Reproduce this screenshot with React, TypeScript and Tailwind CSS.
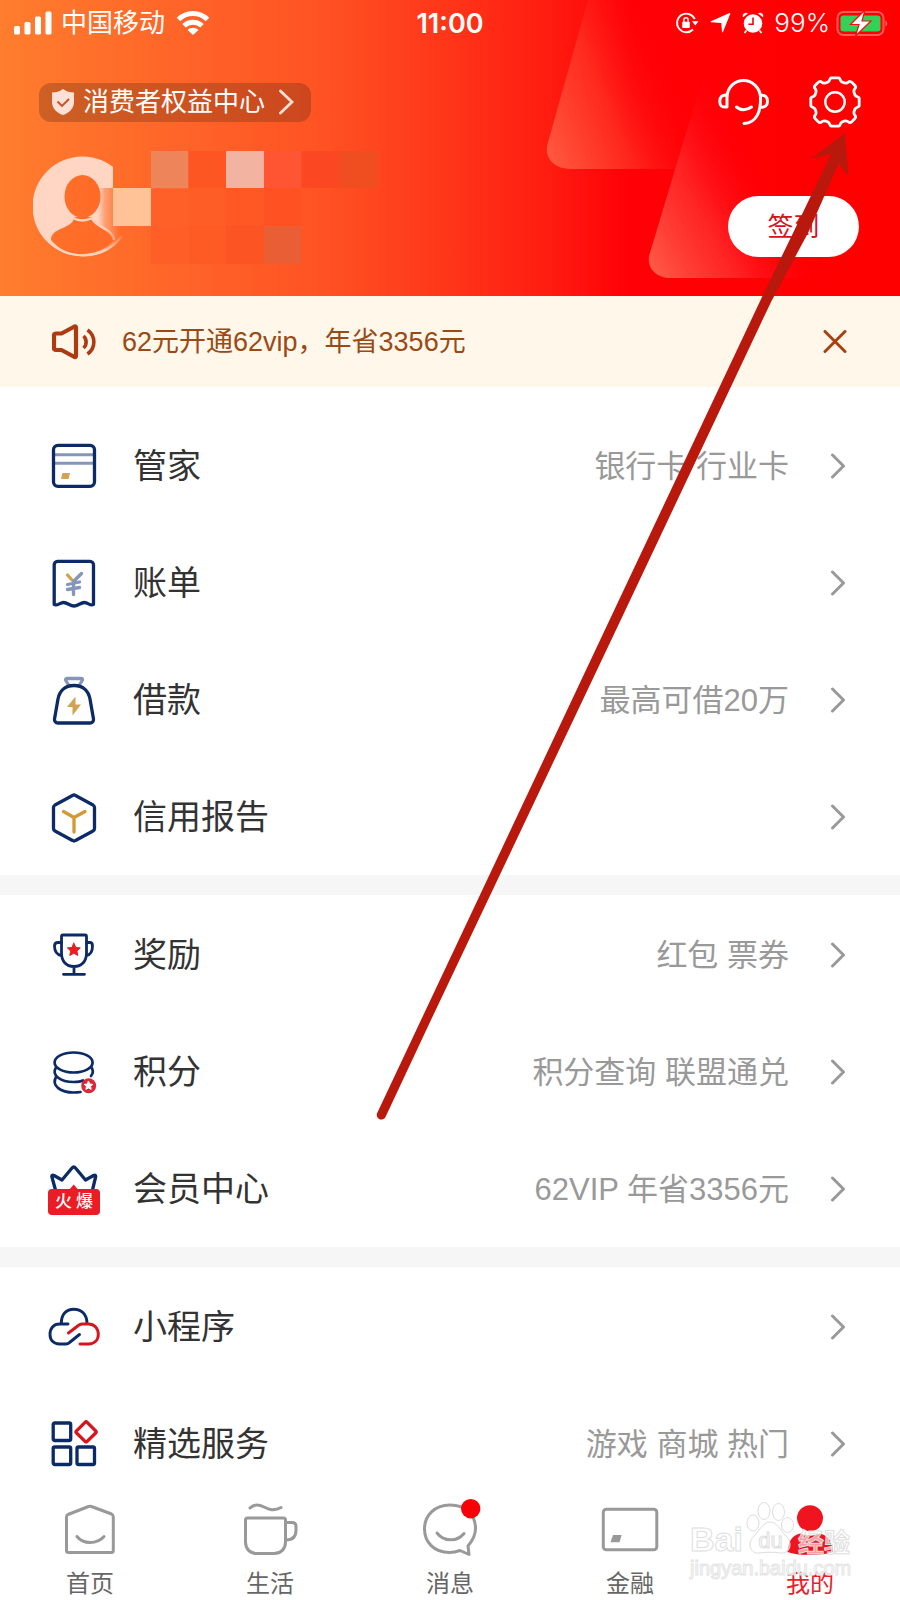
import type { ReactNode } from 'react';

const NAVY = '#0c2a66';
const STEEL = '#8496bb';
const GOLD = '#d0a352';
const RED = '#ea1c25';

const Star = ({ x, y, r, fill }: { x: number; y: number; r: number; fill: string }) => {
  const points = Array.from({ length: 10 }, (_, i) => {
    const radius = i % 2 === 0 ? r : r * 0.48;
    const angle = (Math.PI / 5) * i - Math.PI / 2;
    return `${x + radius * Math.cos(angle)},${y + radius * Math.sin(angle)}`;
  }).join(' ');
  return <polygon points={points} fill={fill} stroke={fill} strokeWidth="1" strokeLinejoin="round" />;
};

const RowIcon = ({ children }: { children: ReactNode }) => (
  <svg
    viewBox="0 0 52 52"
    className="size-[52px] overflow-visible"
    fill="none"
    stroke={NAVY}
    strokeWidth="3.3"
    strokeLinecap="round"
    strokeLinejoin="round"
    aria-hidden="true"
  >
    {children}
  </svg>
);

const CardIcon = () => (
  <RowIcon>
    <path d="M6 14.8H46M6 23.3H46" stroke={STEEL} strokeLinecap="butt" strokeWidth="3" />
    <rect x="5.5" y="5.3" width="41" height="41" rx="4.5" />
    <path d="M14.5 33H22L20.5 39H13Z" fill={GOLD} stroke="none" />
  </RowIcon>
);

const BillIcon = () => (
  <RowIcon>
    <path d="M9.5 4.3H42a3.5 3.5 0 0 1 3.5 3.5V47.5C42.5 49.5 40 45.5 36.5 45.5C32.5 45.5 30 49 26 49C22 49 19.5 45.5 15.5 45.5C12 45.5 9 49.5 6.2 47.5V7.8A3.5 3.5 0 0 1 9.5 4.3Z" />
    <path d="M19.5 18L24 23" stroke={GOLD} />
    <path d="M33.5 16.5L25.5 24.5V37.5M19.5 27.5L31.5 25M19.5 32.5L31.5 30.5" stroke={STEEL} />
  </RowIcon>
);

const BagIcon = () => (
  <RowIcon>
    <path d="M20.5 11L17.5 6A1.5 1.5 0 0 1 19 4.5H33A1.5 1.5 0 0 1 34.5 6L31.5 11" stroke={STEEL} />
    <path d="M26 11.5C35 11.5 40.5 17 42 25L45.5 45A3.5 3.5 0 0 1 42 49H10A3.5 3.5 0 0 1 6.5 45L10 25C11.5 17 17 11.5 26 11.5Z" />
    <path d="M27.5 22.5L19 33H24.5V41.5L33 30.5H27.5Z" fill={GOLD} stroke="none" />
  </RowIcon>
);

const ReportIcon = () => (
  <RowIcon>
    <path d="M24.5 4.5Q26 3.5 27.5 4.5L45 14Q46.5 15 46.5 16.5V37.5Q46.5 39 45 40L27.5 49.5Q26 50.5 24.5 49.5L7 40Q5.5 39 5.5 37.5V16.5Q5.5 15 7 14Z" />
    <path d="M15.5 20.5L26 26.5L37 20.5M26 26.5V41" stroke="#d29a34" />
  </RowIcon>
);

const TrophyIcon = () => (
  <RowIcon>
    <g strokeWidth="2.8">
      <path d="M15 6H37Q38.5 6 38.5 7.5V24C38.5 32 34 37.5 26 37.5S13.5 32 13.5 24V7.5Q13.5 6 15 6ZM26 37.5V45.3M15.5 45.3H36.5" />
      <path d="M13.5 13.5H10Q6.5 13.5 6.5 17C6.5 21.5 8 25.5 13.5 26.5M38.5 13.5H42Q44.5 13.5 44.5 17C44.5 21.5 43.5 25.5 38.5 26.5" />
    </g>
    <Star x={25.8} y={21} r={6.8} fill={RED} />
  </RowIcon>
);

const CoinsIcon = () => (
  <RowIcon>
    <g strokeWidth="2.7">
      <ellipse cx="25.6" cy="16.5" rx="19" ry="10" />
      <path d="M8 21.5C3 29.5 13 36 25.6 36C30 36 33 35.5 35 34.5M43.5 21.5C45.5 24.5 45 27.5 43 30" />
      <path d="M8 31C3 40 13 46.5 25.6 46.5C28.5 46.5 30.5 46.3 32.5 46" />
    </g>
    <circle cx="40.7" cy="39.8" r="7.5" fill="#dc2836" stroke="none" />
    <Star x={40.5} y={39.8} r={4.5} fill="#fff" />
  </RowIcon>
);

const CrownIcon = () => (
  <div className="relative">
    <RowIcon>
      <path d="M7.5 27L3.8 13.5Q3.8 11.5 6 12.5L14 17L24 5Q25.7 3 27.5 5L37.5 17L45.5 12.5Q47.7 11.5 47.7 13.5L44.5 27" />
      <path d="M21 27L25.7 21.5L30.5 27Z" fill={RED} stroke="none" />
    </RowIcon>
    <span className="absolute inset-x-0 bottom-0 flex h-[26px] items-center justify-center gap-1 rounded bg-[#ea1c25] text-[17px] leading-none font-medium text-white">
      <span>火</span>
      <span>爆</span>
    </span>
  </div>
);

const CloudIcon = () => (
  <RowIcon>
    <g strokeWidth="2.9">
      <path d="M13.3 22.5C13.3 13 18.5 8.2 25.8 8.2S39 13 39 22.5" />
      <path d="M20 23H11.5C5.5 23 2 27.5 2 33.3S5.5 43 11.5 43H18Q20 43 21.5 41.5L31.5 33.5" />
      <path d="M20.5 32L31 24Q32.5 23 34.5 23H40.5C46.5 23 50.3 27.5 50.3 33.3S46.5 43 40.5 43H32" stroke="#d8141c" />
    </g>
  </RowIcon>
);

const ServicesIcon = () => (
  <RowIcon>
    <rect x="5.2" y="5" width="17.5" height="17.5" rx="1.5" />
    <rect x="5.2" y="29" width="17.5" height="17.5" rx="1.5" />
    <rect x="29" y="29" width="17.5" height="17.5" rx="1.5" />
    <rect x="30.6" y="6.4" width="15" height="15" rx="1.5" transform="rotate(45 38.1 13.9)" stroke="#d8141c" />
  </RowIcon>
);

const Chevron = () => (
  <svg viewBox="0 0 16 26" className="h-[26px] w-4" fill="none" stroke="#999" strokeWidth="3" strokeLinecap="round" strokeLinejoin="round" aria-hidden="true">
    <path d="M2.5 2L13.5 13L2.5 24" />
  </svg>
);

type Item = { label: string; hint?: string; icon: ReactNode };

const groups: Item[][] = [
  [
    { label: '管家', hint: '银行卡 行业卡', icon: <CardIcon /> },
    { label: '账单', icon: <BillIcon /> },
    { label: '借款', hint: '最高可借20万', icon: <BagIcon /> },
    { label: '信用报告', icon: <ReportIcon /> },
  ],
  [
    { label: '奖励', hint: '红包 票券', icon: <TrophyIcon /> },
    { label: '积分', hint: '积分查询 联盟通兑', icon: <CoinsIcon /> },
    { label: '会员中心', hint: '62VIP 年省3356元', icon: <CrownIcon /> },
  ],
  [
    { label: '小程序', icon: <CloudIcon /> },
    { label: '精选服务', hint: '游戏 商城 热门', icon: <ServicesIcon /> },
  ],
];

const MenuRow = ({ label, hint, icon }: Item) => (
  <li>
    <a href="#" className="flex h-[117px] items-center pr-[54px] pl-12">
      {icon}
      <span className="ml-[33px] text-[34px] leading-10 text-[#333]">{label}</span>
      <span className="mr-[41px] ml-auto pt-0.5 text-[31px] leading-10 text-[#999]">{hint}</span>
      <Chevron />
    </a>
  </li>
);

const StatusBar = () => (
  <div className="grid h-[46px] grid-cols-[1fr_auto_1fr] items-center px-2.5 text-[26px] leading-none">
    <div className="flex items-center pl-1">
      <svg viewBox="0 0 38 24" className="h-6 w-[38px]" fill="currentColor" aria-hidden="true">
        <rect x="0" y="15" width="6" height="8.5" rx="1.5" />
        <rect x="10.5" y="11" width="6" height="12.5" rx="1.5" />
        <rect x="21" y="5.5" width="6" height="18" rx="1.5" />
        <rect x="31.5" y="0.5" width="6" height="23" rx="1.5" />
      </svg>
      <span className="ml-[9px]">中国移动</span>
      <svg viewBox="0 0 34 26" className="ml-[11px] h-[26px] w-[34px]" fill="none" stroke="currentColor" strokeWidth="5" aria-hidden="true">
        <path d="M2.5 9.5C10.5 1.5 23.5 1.5 31.5 9.5" />
        <path d="M8 15.8C13 11 21 11 26 15.8" />
        <path d="M17 25L11.5 20C14.7 17 19.3 17 22.5 20Z" fill="currentColor" stroke="none" />
      </svg>
    </div>
    <time className="font-['Inter',sans-serif] text-[27px] font-semibold">11:00</time>
    <div className="flex items-center justify-end">
      <svg viewBox="0 0 24 24" className="size-6" fill="none" stroke="currentColor" strokeWidth="1.8" aria-hidden="true">
        <path d="M19.8 8A9.3 9.3 0 1 0 18 18.5" />
        <path d="M17 10.2H23.5L20.3 14.5Z" fill="currentColor" stroke="none" />
        <rect x="7.2" y="10.8" width="7.6" height="6.2" rx="1" fill="currentColor" stroke="none" />
        <path d="M8.9 11V8.8a2.1 2.1 0 0 1 4.2 0V11" strokeWidth="1.4" />
      </svg>
      <svg viewBox="0 0 21 20" className="ml-[11px] h-5 w-[21px]" fill="currentColor" aria-hidden="true">
        <path d="M20.3 0.7L13 19Q12.4 20 12 18.8L11.3 9.9L1.2 9.3Q0 8.8 1 8.2L19 0.3Q20.5-0.2 20.3 0.7Z" />
      </svg>
      <svg viewBox="0 0 22 22" className="ml-[11px] size-[22px]" fill="currentColor" aria-hidden="true">
        <path d="M1 5.2A3.2 3.2 0 0 1 6 1.5ZM21 5.2A3.2 3.2 0 0 0 16 1.5Z" />
        <circle cx="11" cy="11.5" r="9.3" />
        <path d="M4.5 18.5L2.5 21M17.5 18.5L19.5 21" stroke="currentColor" strokeWidth="1.8" />
        <path d="M11 5.5V12.2H6.5" fill="none" stroke="#f00" strokeWidth="1.6" />
      </svg>
      <span className="ml-2.5 font-['Inter',sans-serif] font-light">99%</span>
      <svg viewBox="0 0 54 28" className="ml-1.5 h-7 w-[54px]" aria-hidden="true">
        <rect x="1.5" y="3" width="46" height="23" rx="6" fill="none" stroke="#fff" strokeOpacity="0.35" strokeWidth="2" />
        <path d="M49.5 11Q53 14.5 49.5 18Z" fill="#fff" fillOpacity="0.4" />
        <rect x="4.5" y="6.5" width="40" height="16" rx="3" fill="#32d158" />
        <path d="M29 1L14.5 15.5H23L19.5 27L35 12H26Z" fill="#fff" stroke="#f01010" strokeWidth="1.2" />
      </svg>
    </div>
  </div>
);

// profile photo followed by the pixelated nickname block
const Profile = () => (
  <svg viewBox="33 150 345 115" className="h-[115px] w-[345px]" role="img" aria-label="头像">
    <defs>
      <linearGradient id="photo" gradientUnits="userSpaceOnUse" x1="98" x2="120" y1="0" y2="0">
        <stop offset="0" stopColor="#ffd5c3" />
        <stop offset="0.3" stopColor="#ffd5c3" stopOpacity="0.5" />
        <stop offset="1" stopColor="#ffd5c3" stopOpacity="0" />
      </linearGradient>
      <linearGradient id="ring" gradientUnits="userSpaceOnUse" x1="104" x2="126" y1="0" y2="0">
        <stop offset="0" stopColor="#ffcfb8" />
        <stop offset="1" stopColor="#ffcfb8" stopOpacity="0" />
      </linearGradient>
      <linearGradient id="person" gradientUnits="userSpaceOnUse" x1="50" x2="115" y1="0" y2="0">
        <stop offset="0" stopColor="#ff7029" />
        <stop offset="1" stopColor="#ff6927" />
      </linearGradient>
      <clipPath id="photoTop">
        <path d="M30 150H113V188H30Z" />
      </clipPath>
      <clipPath id="photoBottom">
        <path d="M30 188H135V260H30Z" />
      </clipPath>
    </defs>
    <circle cx="82.5" cy="206.5" r="50" fill="#ffd5c3" clipPath="url(#photoTop)" />
    <circle cx="82.5" cy="206.5" r="50" fill="url(#photo)" clipPath="url(#photoBottom)" />
    <path d="M74 217C74 229 51 227 51 240C66 259 98 259 114 240C114 227 92 229 92 217Z" fill="url(#person)" />
    <ellipse cx="82.5" cy="196.5" rx="18" ry="21.5" fill="url(#person)" />
    <path d="M73 218Q82.5 223 92 218" fill="none" stroke="#ffd0bc" strokeWidth="2.5" />
    <path d="M92 218C95 227 113 229 114 240" fill="none" stroke="url(#ring)" strokeWidth="2.5" />
    <path d="M82.5 255.3C99 255.3 113 248 122 236" fill="none" stroke="url(#ring)" strokeWidth="2.5" />
    <rect x="113" y="188" width="38" height="38" fill="#ffc397" />
    <rect x="151" y="151" width="37.5" height="37.5" fill="#ee8459" />
    <rect x="188.5" y="151" width="37.5" height="37.5" fill="#fd5622" />
    <rect x="226" y="151" width="38" height="37" fill="#f2b4a1" />
    <rect x="264" y="151" width="37.5" height="37" fill="#ff5532" />
    <rect x="301.5" y="151" width="37.5" height="37" fill="#fb4722" />
    <rect x="339" y="151" width="38" height="37" fill="#f04e20" />
    <rect x="151" y="188.5" width="37.5" height="37.5" fill="#ff6028" />
    <rect x="188.5" y="188.5" width="37.5" height="37.5" fill="#ff5d26" />
    <rect x="226" y="188" width="38" height="38" fill="#ff5825" />
    <rect x="264" y="188" width="37" height="38" fill="#ff5122" />
    <rect x="151" y="226" width="37.5" height="38" fill="#ff5e26" />
    <rect x="188.5" y="226" width="37.5" height="38" fill="#fe5a24" />
    <rect x="226" y="226" width="38" height="38" fill="#fc5523" />
    <rect x="264" y="226" width="37" height="38" fill="#e95e34" />
  </svg>
);

const HeaderShapes = () => (
  <svg viewBox="500 0 400 296" className="absolute top-0 right-0 h-[296px] w-[400px]" aria-hidden="true">
    <defs>
      <linearGradient id="glowA" gradientUnits="userSpaceOnUse" x1="550" y1="165" x2="688" y2="105">
        <stop offset="0" stopColor="#ff5a40" />
        <stop offset="0.5" stopColor="#ff3a28" stopOpacity="0.65" />
        <stop offset="1" stopColor="#ff0008" stopOpacity="0" />
      </linearGradient>
      <linearGradient id="glowB" gradientUnits="userSpaceOnUse" x1="652" y1="272" x2="778" y2="205">
        <stop offset="0" stopColor="#ff5a46" />
        <stop offset="0.5" stopColor="#ff3432" stopOpacity="0.7" />
        <stop offset="1" stopColor="#ff0018" stopOpacity="0" />
      </linearGradient>
    </defs>
    <path d="M588 0L547 146C545 160 556 169 571 169H740V0Z" fill="url(#glowA)" />
    <path d="M702 80L649 256C647 270 658 278 670 278H860V80Z" fill="url(#glowB)" />
  </svg>
);

const Header = () => (
  <header className="relative bg-[linear-gradient(90deg,#ff7d2e_0%,#ff6428_20%,#ff5223_36%,#ff3519_50%,#ff1c10_61%,#ff0006_70%,#ff0000_100%)] pb-[31px] text-white">
    <HeaderShapes />
    <div className="relative">
      <StatusBar />
      <div className="mt-[30px] flex h-[52px] items-center justify-between px-[39px]">
        <button type="button" className="flex h-[39px] items-center rounded-xl bg-[#5a2a10]/30 pr-[17px] pl-[13px] text-[26px] leading-none">
          <svg viewBox="0 0 22 26" className="h-[26px] w-[22px]" aria-hidden="true">
            <path d="M11 0C14 2.5 18 3.5 22 3.5V13C22 19.5 17 24 11 26C5 24 0 19.5 0 13V3.5C4 3.5 8 2.5 11 0Z" fill="#ffe0d6" />
            <path d="M5.5 12.5L10 17L17 10" fill="none" stroke="#c8501f" strokeWidth="1.8" />
          </svg>
          <span className="ml-[9px]">消费者权益中心</span>
          <svg viewBox="0 0 16 26" className="ml-[13px] h-[26px] w-4" fill="none" stroke="#ffe0d6" strokeWidth="2.8" strokeLinecap="round" aria-hidden="true">
            <path d="M2.5 2L14 13L2.5 24" />
          </svg>
        </button>
        <div className="flex gap-[39px]">
          <button type="button" aria-label="客服">
            <svg viewBox="0 0 52 52" className="size-[52px]" fill="none" stroke="currentColor" strokeWidth="3" strokeLinecap="round" strokeLinejoin="round" aria-hidden="true">
              <path d="M9 20C10 11 16.5 4.5 25.5 4.5S42 12 42.5 21C43 34 39.5 47 26 47.5" />
              <path d="M9 31V19C4 18.5 1.8 21 1.8 25.5C1.8 30 4 31.5 9 31Z" />
              <path d="M42.5 19.5C47 18.5 49.5 21 49.5 25.5C49.5 29.5 46.5 32 42.5 31" />
              <path d="M18.5 31C22.5 34.5 28.5 34.5 33.5 31" />
            </svg>
          </button>
          <button type="button" aria-label="设置">
            <svg viewBox="0 0 52 52" className="size-[52px]" fill="none" stroke="currentColor" strokeWidth="2.8" strokeLinejoin="round" aria-hidden="true">
              <path
                d="M22 1.8H30C31 1.8 31 5 33 6S38 7.5 39.5 6C40.5 5 42 5.5 43 6.5L45.5 9C46.5 10 47 11.5 46 12.5C44.5 14 45 17 46 19S50.2 21 50.2 22V30C50.2 31 47 31 46 33S44.5 38 46 39.5C47 40.5 46.5 42 45.5 43L43 45.5C42 46.5 40.5 47 39.5 46C38 44.5 35 45 33 46S31 50.2 30 50.2H22C21 50.2 21 47 19 46S14 44.5 12.5 46C11.5 47 10 46.5 9 45.5L6.5 43C5.5 42 5 40.5 6 39.5C7.5 38 7 35 6 33S1.8 31 1.8 30V22C1.8 21 5 21 6 19S7.5 14 6 12.5C5 11.5 5.5 10 6.5 9L9 6.5C10 5.5 11.5 5 12.5 6C14 7.5 17 7 19 6S21 1.8 22 1.8Z"
              />
              <circle cx="26" cy="26" r="9.7" strokeWidth="2.4" />
            </svg>
          </button>
        </div>
      </div>
      <div className="mt-[22px] flex items-end justify-between pr-[41px] pl-[33px]">
        <Profile />
        <button type="button" className="mb-2 h-[61px] w-[131px] rounded-full bg-white text-[26px] leading-none text-[#d8101c]">
          签到
        </button>
      </div>
    </div>
  </header>
);

const Notice = () => (
  <div className="flex h-[91px] items-center bg-[#fef7ea] pr-[53px] pl-[52px] text-[#9a4a14]">
    <svg viewBox="0 0 44 36" className="h-9 w-11" fill="none" stroke="#ad3a10" strokeWidth="4.2" strokeLinecap="round" strokeLinejoin="round" aria-hidden="true">
      <path d="M4 9.5H9.5L22.5 2.5Q24 2 24 3.5V32Q24 33.5 22.5 33L9.5 26H4Q2 26 2 24V11.5Q2 9.5 4 9.5Z" />
      <path d="M31.5 12C35 15 35 21 31.5 24M35.5 6C44 12 44 24 35.5 30" strokeWidth="3.6" strokeLinecap="butt" />
    </svg>
    <p className="ml-[26px] text-[27px] leading-10">62元开通62vip，年省3356元</p>
    <button type="button" aria-label="关闭" className="ml-auto">
      <svg viewBox="0 0 24 24" className="size-6" fill="none" stroke="#a8400f" strokeWidth="3" strokeLinecap="round" aria-hidden="true">
        <path d="M2 1.5L22 21.5M22 1.5L2 21.5" />
      </svg>
    </button>
  </div>
);

const TabIcon = ({ children }: { children: ReactNode }) => (
  <svg viewBox="0 2 60 56" className="h-14 w-[60px] overflow-visible" fill="none" stroke="#999" strokeWidth="3" strokeLinecap="round" strokeLinejoin="round" aria-hidden="true">
    {children}
  </svg>
);

const tabs: { label: string; icon: ReactNode; active?: boolean }[] = [
  {
    label: '首页',
    icon: (
      <TabIcon>
        <path d="M8 14.5L28.5 6.5Q30 6 31.5 6.5L51.5 14Q53.3 15 53.3 17V50.5Q53.3 52.5 51.3 52.5H8.5Q6.5 52.5 6.5 50.5V17Q6.5 15 8 14.5Z" />
        <path d="M17 36.5C23 44.5 37 44.5 44 36.5" />
      </TabIcon>
    ),
  },
  {
    label: '生活',
    icon: (
      <TabIcon>
        <path d="M7.5 18H43.5Q45.5 18 45.5 20V42C45.5 49 41 53.5 34 53.5H17C10 53.5 5.5 49 5.5 42V20Q5.5 18 7.5 18Z" />
        <path d="M45.5 22.5H52Q56 22.5 56 26.5V30C56 36 53 40 46 40" />
        <path d="M10 8C14 4 19 4.5 24 7S34 11.5 41 7.5" />
      </TabIcon>
    ),
  },
  {
    label: '消息',
    icon: (
      <TabIcon>
        <path d="M49 54.5L40 50.5C36 52 33 52.5 29.5 52.5C14 52.5 4.5 42 4.5 29S14 5 30 5C46 5 55.5 15 55.5 28.5C55.5 35 53 40 48 46Z" />
        <path d="M17 33C24 42 37 42 44 33.5" />
        <circle cx="50.7" cy="8.7" r="9.7" fill="#f80208" stroke="none" />
      </TabIcon>
    ),
  },
  {
    label: '金融',
    icon: (
      <TabIcon>
        <rect x="3.3" y="9.3" width="53.5" height="40.5" rx="3" />
        <path d="M13 35H21.7L19.5 42.3H10.5Z" fill="#999" stroke="none" />
      </TabIcon>
    ),
  },
  {
    label: '我的',
    active: true,
    icon: (
      <TabIcon>
        <circle cx="30" cy="18.3" r="13" fill="#f0141e" stroke="none" />
        <path d="M7.5 52C8 42 12 35.5 20 33.5Q30 38 40 33.5C48 35.5 52.5 42 53 52Q45 55 30 55T7.5 52Z" fill="#f0141e" stroke="none" />
      </TabIcon>
    ),
  },
];

const Watermark = () => (
  <div className="pointer-events-none absolute top-0 right-[50px] w-[160px] text-white/60" aria-hidden="true">
    <div className="flex h-[54px] items-end justify-between leading-none font-bold [-webkit-text-stroke:1px_#dedede]">
      <span className="text-[34px]">Bai</span>
      <div className="relative">
        <svg viewBox="0 0 48 54" className="h-[54px] w-12" fill="#fff" fillOpacity="0.6" stroke="#dcdcdc">
          <ellipse cx="7" cy="21" rx="6" ry="8" />
          <ellipse cx="18" cy="9" rx="6" ry="8.5" />
          <ellipse cx="32.5" cy="10" rx="6" ry="8.5" />
          <ellipse cx="41.5" cy="23" rx="6" ry="7.5" />
          <path d="M24 20C31 20 34 28 40 34C48 42 43 52 35 51C28 50 20 50 13 51C5 52 0 42 8 34C14 28 17 20 24 20Z" />
        </svg>
        <span className="absolute inset-x-2 bottom-1 text-center text-[22px] font-normal">du</span>
      </div>
      <span className="text-[26px]">经验</span>
    </div>
    <div className="text-center text-[20px] leading-6 [-webkit-text-stroke:1px_#e4e4e4]">jingyan.baidu.com</div>
  </div>
);

const TabBar = () => (
  <nav className="relative bg-white pb-1">
    <ul className="grid grid-cols-5">
      {tabs.map((tab) => (
        <li key={tab.label}>
          <a href="#" className="flex flex-col items-center">
            {tab.icon}
            <span className={tab.active ? 'mt-3.5 text-2xl leading-6 text-[#e8202a]' : 'mt-3.5 text-2xl leading-6 text-[#666]'}>
              {tab.label}
            </span>
          </a>
        </li>
      ))}
    </ul>
    <Watermark />
  </nav>
);

const PointerArrow = () => (
  <svg viewBox="370 130 485 990" className="pointer-events-none absolute top-[130px] right-[45px] h-[990px] w-[485px]" aria-hidden="true">
    <path
      d="M845 133L848.5 176L838.5 164L808 233L771.5 301L619.8 622L430.5 1021L385.5 1117A4.6 4.6 0 0 1 377.2 1113L421.5 1019L610.5 618L762 297L794 231L831 154L810 159C824 150 834 141 845 133Z"
      fill="#b9190c"
    />
  </svg>
);

export default function App() {
  return (
    <div className="relative bg-white font-['Liberation_Sans','Noto_Sans_CJK_SC',sans-serif]">
      <Header />
      <Notice />
      <main className="pt-5">
        {groups.map((items, i) => (
          <section key={i}>
            {i > 0 && <div className="mb-px h-5 bg-[#f6f6f6]" />}
            <ul>
              {items.map((item) => (
                <MenuRow key={item.label} {...item} />
              ))}
            </ul>
          </section>
        ))}
      </main>
      <TabBar />
      <PointerArrow />
    </div>
  );
}
